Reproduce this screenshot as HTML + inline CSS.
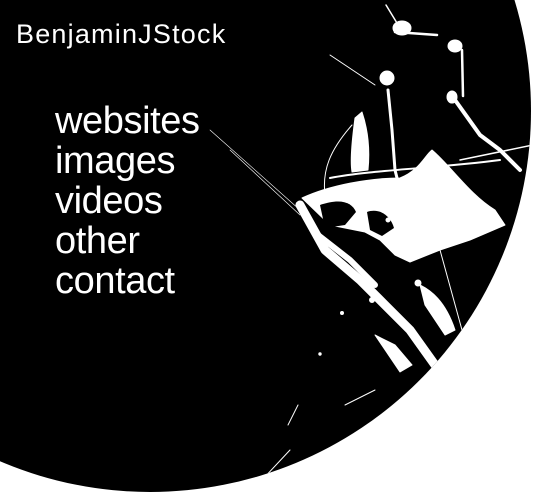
<!DOCTYPE html>
<html><head><meta charset="utf-8"><style>
html,body{margin:0;padding:0;background:#fff;width:533px;height:495px;overflow:hidden;position:relative}
.c{position:absolute;left:-231px;top:-270px;width:762px;height:762px;border-radius:50%;background:#000}
svg{position:absolute;left:0;top:0}
.t{position:absolute;color:#fff;font-family:"Liberation Sans",sans-serif;white-space:nowrap}
.logo{left:16px;top:19px;font-size:27px;letter-spacing:1.2px;line-height:30px}
.menu{left:55px;top:101px;font-size:38px;line-height:40px;letter-spacing:-0.4px}
</style></head><body>
<div class="c"></div>
<svg width="533" height="495" viewBox="0 0 533 495">
<defs><clipPath id="cp"><circle cx="150" cy="111" r="381"/></clipPath></defs>
<g clip-path="url(#cp)" fill="#fff" stroke="#fff" stroke-linecap="round" stroke-linejoin="round">
<g fill="none">
<path d="M386 5 L400 28" stroke-width="1.5"/>
<path d="M395 32 L437 35" stroke-width="2.5"/>
<path d="M462 50 L463 96" stroke-width="2.5"/>
<path d="M330 55 L375 85" stroke-width="1"/>
<path d="M455 100 L480 135 L500 150 L520 170" stroke-width="4"/>
<path d="M330 178 C 370 170 440 168 500 160" stroke-width="2"/>
<path d="M388 90 L392 130 L395 170 L410 230" stroke-width="3"/>
<path d="M352 125 C 330 150 322 170 325 195" stroke-width="1"/>
<path d="M300 205 L325 250 L360 280 L385 305 L410 330 L440 372" stroke-width="9"/>
<path d="M318 235 L350 260 L375 285" stroke-width="6"/>
<path d="M210 130 L300 210" stroke-width="0.6"/>
<path d="M230 150 L300 215" stroke-width="0.6"/>
<path d="M262 480 L290 450" stroke-width="1"/>
<path d="M288 425 L298 405" stroke-width="1"/>
<path d="M345 405 L375 390" stroke-width="1"/>
<path d="M460 160 L533 145" stroke-width="1.5"/>
<path d="M440 250 L462 330" stroke-width="1"/>
</g>
<ellipse cx="402" cy="28" rx="9" ry="7"/>
<ellipse cx="455" cy="46" rx="7" ry="6"/>
<ellipse cx="452" cy="97" rx="5" ry="6"/>
<ellipse cx="387" cy="78" rx="7" ry="7"/>
<path d="M355 118 C 352 140 350 160 352 172 L368 170 C 370 150 368 130 362 112 Z"/>
<path d="M302 198 C 330 185 370 178 400 178 C 420 170 425 155 432 150 C 450 165 470 195 495 210 L505 225 L470 240 L440 250 L410 262 L395 255 L380 240 L365 232 L330 225 Z"/>
<path d="M320 205 C 340 198 352 202 356 212 L345 225 L325 228 Z" fill="#000" stroke="none"/>
<path d="M367 212 C 378 208 390 214 394 228 L382 236 L370 230 Z" fill="#000" stroke="none"/>
<path d="M420 285 C 430 290 445 300 455 330 L445 335 L425 305 Z"/>
<path d="M375 335 L395 345 L412 365 L400 372 Z"/>
<circle cx="385" cy="185" r="2.5"/><circle cx="388" cy="220" r="2"/>
<circle cx="418" cy="283" r="3"/><circle cx="437" cy="308" r="3"/>
<circle cx="375" cy="190" r="1.5"/><circle cx="475" cy="205" r="1.5"/>
<circle cx="342" cy="313" r="1.5"/><circle cx="320" cy="354" r="1.2"/>
<circle cx="372" cy="300" r="2.5"/><circle cx="350" cy="195" r="2"/>
</g>
</svg>
<div class="t logo">BenjaminJStock</div>
<div class="t menu">websites<br>images<br>videos<br>other<br>contact</div>
</body></html>
